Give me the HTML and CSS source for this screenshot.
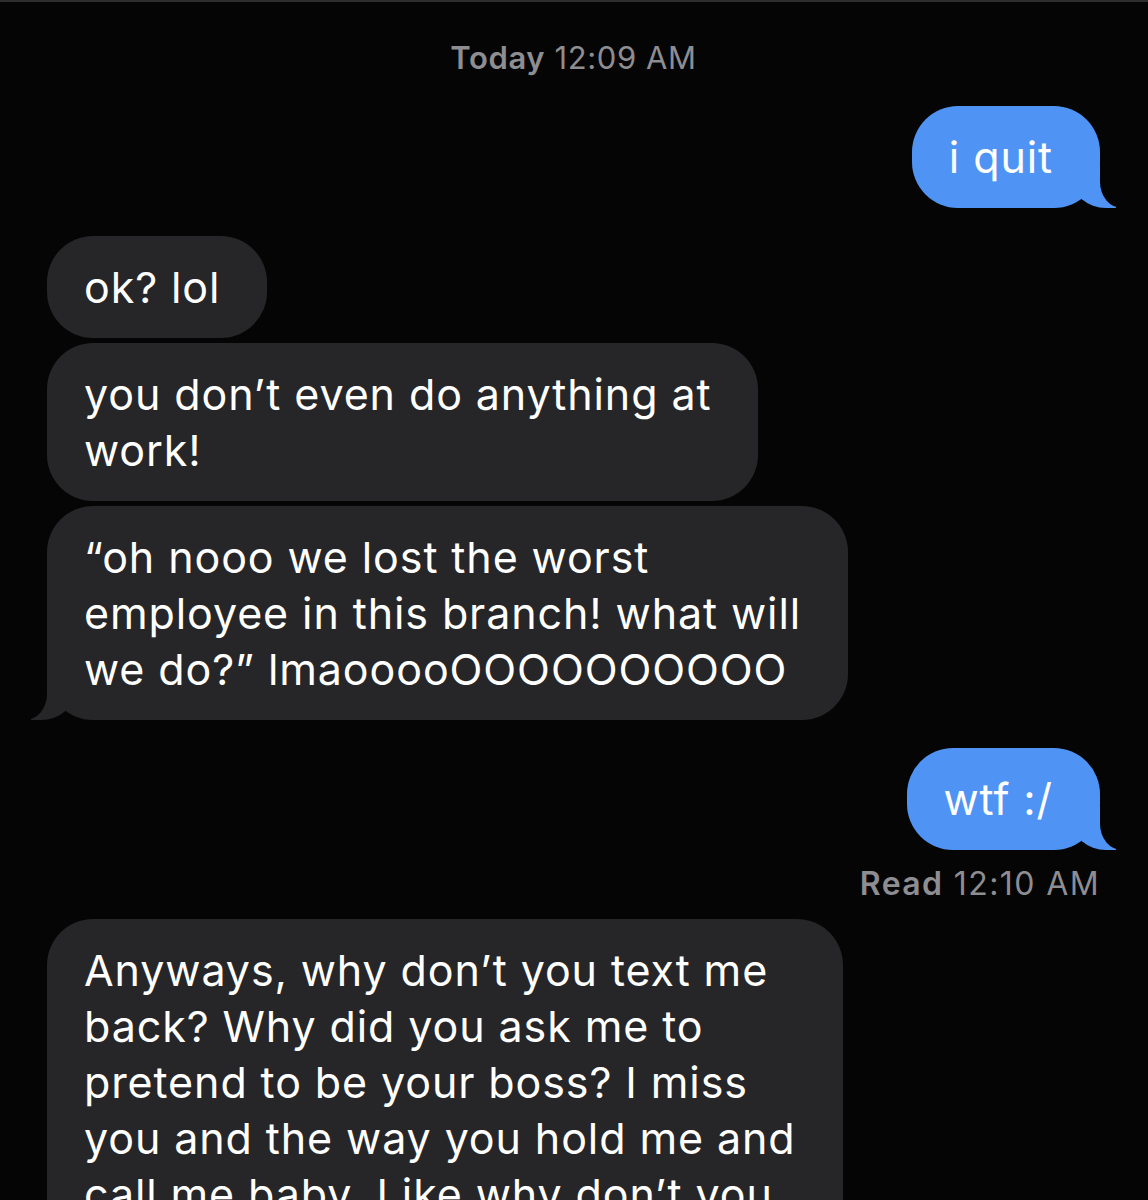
FILE: index.html
```html
<!DOCTYPE html>
<html lang="en">
  <head>
    <meta charset="UTF-8" />
    <meta name="viewport" content="width=device-width, initial-scale=1.0" />
    <title>Messages</title>
    <link rel="stylesheet" href="styles.css">
  </head>
  <body>
    <!-- Conversa -->
    <main class="thread">
      <div class="stamp"><b>Today</b> 12:09 AM</div>

      <div class="bubble sent tail">i quit</div>

      <div class="group">
        <div class="bubble received">ok? lol</div>
        <div class="bubble received">you don’t even do anything at<br>work!</div>
        <div class="bubble received tail">“oh nooo we lost the worst<br>employee in this branch! what will<br>we do?” lmaooooOOOOOOOOOO</div>
      </div>

      <div class="bubble sent tail">wtf :/</div>
      <div class="read"><b>Read</b> 12:10 AM</div>

      <div class="bubble received tail">Anyways, why don’t you text me<br>back? Why did you ask me to<br>pretend to be your boss? I miss<br>you and the way you hold me and<br>call me baby. Like why don’t you<br>ever text me back anymore?</div>
    </main>
  </body>
</html>
```

FILE: styles.css
```css
/* Reset basico */
html,
body {
  margin: 0;
  padding: 0;
}

body {
  background-color: #050505;
  border-top: 2px solid #2e2e30;
  font-family: 'Inter', 'Liberation Sans', sans-serif;
  color: #ffffff;
  overflow: hidden;
}

.thread {
  display: flex;
  flex-direction: column;
  padding: 0 48px 0 47px;
}

/* Data no topo */
.stamp {
  align-self: center;
  margin-top: 38px;
  font-size: 31px;
  line-height: 36px;
  letter-spacing: 0.6px;
  color: #8d8d92;
}

.stamp b,
.read b {
  font-weight: 600;
}

/* Baloes */
.bubble {
  position: relative;
  z-index: 0;
  width: fit-content;
  padding: 23px 47px 23px 37px;
  border-radius: 46px;
  font-size: 43px;
  line-height: 56px;
  letter-spacing: 0.9px;
  white-space: nowrap;
}

.sent {
  align-self: flex-end;
  background-color: #4f94f5;
  margin-top: 30px;
}

.group + .sent {
  margin-top: 28px;
}

.received {
  background-color: #262629;
}

.group {
  display: flex;
  flex-direction: column;
  gap: 5px;
  margin-top: 28px;
}

/* Rabinho do balao */
.tail::before,
.tail::after {
  content: "";
  position: absolute;
  z-index: -1;
  bottom: 0;
  height: 44px;
}

.sent.tail::before {
  right: -16px;
  width: 44px;
  background-color: #4f94f5;
  border-bottom-left-radius: 34px 30px;
}

.sent.tail::after {
  right: -24px;
  width: 24px;
  background-color: #050505;
  border-bottom-left-radius: 22px 26px;
}

.received.tail::before {
  left: -16px;
  width: 44px;
  background-color: #262629;
  border-bottom-right-radius: 34px 30px;
}

.received.tail::after {
  left: -24px;
  width: 24px;
  background-color: #050505;
  border-bottom-right-radius: 22px 26px;
}

/* Confirmacao de leitura */
.read {
  align-self: flex-end;
  margin-top: 16px;
  font-size: 32px;
  line-height: 36px;
  letter-spacing: 1.4px;
  color: #8d8d92;
}

.read + .bubble {
  margin-top: 17px;
}
```
